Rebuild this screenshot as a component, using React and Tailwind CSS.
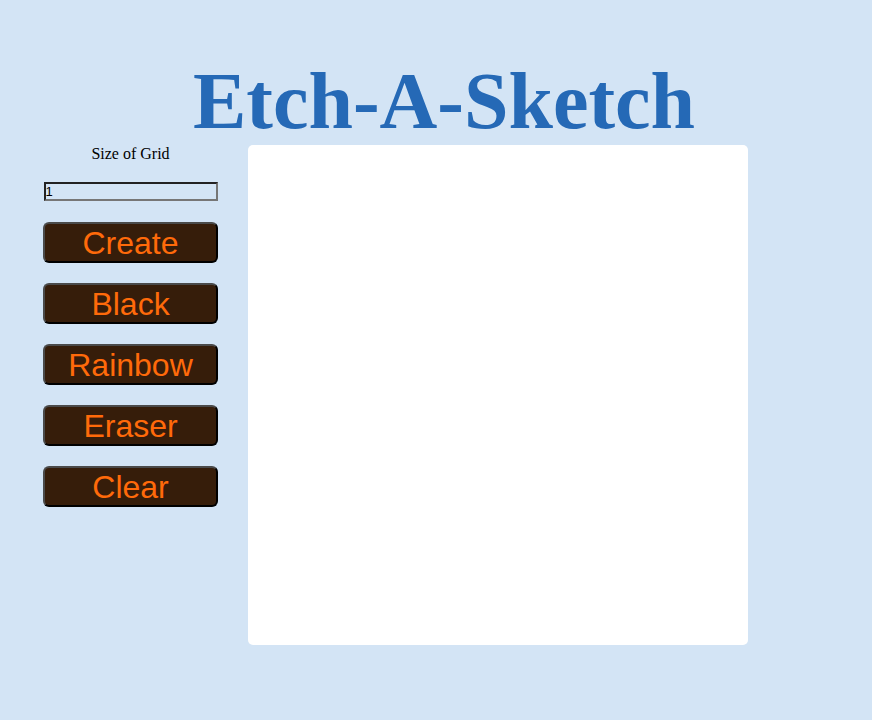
const buttons = ["Create", "Black", "Rainbow", "Eraser", "Clear"];

export default function App() {
  return (
    <div className="min-h-[720px] bg-[#d3e4f5] pt-[57px]">
      <h1 className="text-center text-[80px] leading-[88px] font-bold text-[#2569b6] font-['Liberation_Serif',serif] pl-[16px]">
        Etch-A-Sketch
      </h1>
      <div className="flex items-start gap-[30px] pl-[43px]">
        <div className="flex w-[175px] flex-col items-center">
          <p className="font-['Liberation_Serif',serif] text-[16px] leading-[18px] text-black">
            Size of Grid
          </p>
          <input
            type="text"
            defaultValue="1"
            className="mt-[19px] h-[19px] w-[174px] border-2 border-t-[#222] border-l-[#222] border-b-[#767676] border-r-[#767676] bg-transparent px-0 font-['Liberation_Sans',sans-serif] text-[13px] leading-[15px] text-black outline-none"
          />
          <div className="mt-[21px] flex flex-col gap-[20px]">
            {buttons.map((b) => (
              <button
                key={b}
                className="h-[41px] w-[175px] rounded-[6px] border-2 border-t-[#4a4a4a] border-l-[#4a4a4a] border-b-black border-r-black bg-[#361d0a] font-['Liberation_Sans',sans-serif] text-[32px] leading-[34px] text-[#ff6a0a]"
              >
                {b}
              </button>
            ))}
          </div>
        </div>
        <div className="h-[500px] w-[500px] rounded-[5px] bg-white" />
      </div>
    </div>
  );
}
